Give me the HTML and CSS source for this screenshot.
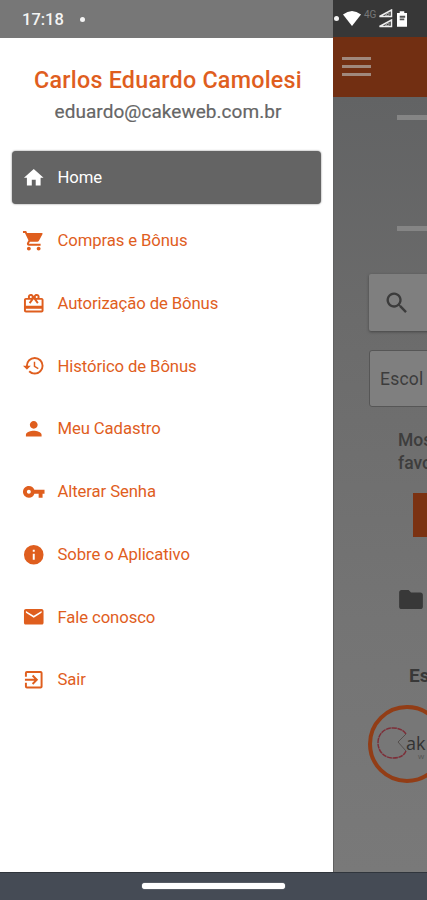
FILE: index.html
```html
<!DOCTYPE html>
<html lang="pt-BR">
<head>
<meta charset="utf-8">
<title>Menu</title>
<link rel="stylesheet" href="styles.css">
</head>
<body>
<div class="phone">
  <aside class="drawer">
    <div class="status status-left"><span class="clock">17:18</span><i class="dot"></i></div>
    <header class="profile">
      <h1><span>Carlos Eduardo Camolesi</span></h1>
      <p>eduardo@cakeweb.com.br</p>
    </header>
    <nav class="menu">
      <a class="item active"><svg viewBox="0 0 24 24"><path d="M10 20v-6h4v6h5v-8h3L12 3 2 12h3v8z"/></svg>Home</a>
      <a class="item"><svg viewBox="0 0 24 24"><path d="M7 18c-1.1 0-1.99.9-1.99 2S5.900 22 7 22s2-.9 2-2-.9-2-2-2zM1 2v2h2l3.600 7.590-1.350 2.450c-.16.28-.25.61-.25.96 0 1.100.9 2 2 2h12v-2H7.420c-.14 0-.25-.11-.25-.25l.03-.12.9-1.630h7.450c.75 0 1.410-.41 1.750-1.030l3.580-6.490A1 1 0 0 0 20 4H5.210l-.94-2H1zm16 16c-1.100 0-1.990.9-1.990 2s.89 2 1.990 2 2-.9 2-2-.9-2-2-2z"/></svg>Compras e Bônus</a>
      <a class="item"><svg viewBox="0 0 24 24"><path d="M20 6h-2.180c.11-.31.18-.65.18-1 0-1.660-1.340-3-3-3-1.050 0-1.960.54-2.500 1.350l-.5.670-.5-.68C10.960 2.540 10.050 2 9 2 7.340 2 6 3.340 6 5c0 .35.07.69.18 1H4c-1.110 0-1.990.89-1.990 2L2 19c0 1.110.89 2 2 2h16c1.110 0 2-.89 2-2V8c0-1.110-.89-2-2-2zm-5-2c.55 0 1 .45 1 1s-.45 1-1 1-1-.45-1-1 .45-1 1-1zM9 4c.55 0 1 .45 1 1s-.45 1-1 1-1-.45-1-1 .45-1 1-1zm11 15H4v-2h16v2zm0-5H4V8h5.080L7 10.830 8.620 12 11 8.760l1-1.360 1 1.360L15.380 12 17 10.830 14.920 8H20v6z"/></svg>Autorização de Bônus</a>
      <a class="item"><svg viewBox="0 0 24 24"><path d="M13 3a9 9 0 0 0-9 9H1l3.890 3.890.07.14L9 12H6c0-3.870 3.130-7 7-7s7 3.130 7 7-3.130 7-7 7c-1.930 0-3.680-.79-4.940-2.060l-1.420 1.420A8.950 8.950 0 0 0 13 21a9 9 0 0 0 0-18zm-1 5v5l4.280 2.540.72-1.210-3.500-2.080V8H12z"/></svg>Histórico de Bônus</a>
      <a class="item"><svg viewBox="0 0 24 24"><path d="M12 12c2.210 0 4-1.790 4-4s-1.790-4-4-4-4 1.790-4 4 1.790 4 4 4zm0 2c-2.670 0-8 1.340-8 4v2h16v-2c0-2.660-5.330-4-8-4z"/></svg>Meu Cadastro</a>
      <a class="item"><svg viewBox="0 0 24 24"><path d="M12.650 10A5.990 5.990 0 0 0 7 6c-3.310 0-6 2.690-6 6s2.690 6 6 6a5.990 5.990 0 0 0 5.650-4H17v4h4v-4h2v-4H12.650zM7 14c-1.100 0-2-.9-2-2s.9-2 2-2 2 .9 2 2-.9 2-2 2z"/></svg>Alterar Senha</a>
      <a class="item"><svg viewBox="0 0 24 24"><path d="M12 2a10 10 0 1 0 0 20 10 10 0 0 0 0-20zm1 15h-2v-6h2v6zm0-8h-2V7h2v2z"/></svg>Sobre o Aplicativo</a>
      <a class="item"><svg viewBox="0 0 24 24"><path d="M20 4H4c-1.100 0-1.990.9-1.990 2L2 18c0 1.100.9 2 2 2h16c1.100 0 2-.9 2-2V6c0-1.100-.9-2-2-2zm0 4-8 5-8-5V6l8 5 8-5v2z"/></svg>Fale conosco</a>
      <a class="item"><svg viewBox="0 0 24 24"><path d="M10.090 15.590 11.500 17l5-5-5-5-1.410 1.410L12.670 11H3v2h9.670l-2.580 2.590zM19 3H5a2 2 0 0 0-2 2v4h2V5h14v14H5v-4H3v4a2 2 0 0 0 2 2h14c1.100 0 2-.9 2-2V5c0-1.100-.9-2-2-2z"/></svg>Sair</a>
    </nav>
  </aside>

  <main class="page">
    <div class="status status-right">
      <i class="dot small"></i>
      <svg class="wifi" viewBox="0 0 18 15"><path d="M0 3.500Q9-3.500 18 3.500L9 15z"/></svg>
      <span class="net">4G</span>
      <svg class="signal" viewBox="0 0 15 19"><path d="M1.500 7.500 13.500 1v6.500zM1.500 17.500l12-6.500v6.500z"/><path class="fill" d="m7 6.500 4-3v3zM7 16.500l4-3v3z"/></svg>
      <svg class="battery" viewBox="0 0 11 17"><path d="M3 0h5v2h3v15H0V2h3z"/><path class="level" d="M3 5h6v2H3zM3 8h5v2H3z"/></svg>
    </div>
    <div class="appbar"><div class="burger"><i></i><i></i><i></i></div></div>
    <div class="content">
      <i class="line"></i>
      <i class="line second"></i>
      <div class="field search"><svg viewBox="0 0 24 24"><path d="M15.500 14h-.79l-.28-.27A6.500 6.500 0 1 0 13.730 14.430l.27.28v.79l5 4.990L20.490 19l-4.990-5zm-6 0a4.500 4.500 0 1 1 0-9 4.500 4.500 0 0 1 0 9z"/></svg></div>
      <div class="field select">Escol</div>
      <p class="hint">Mos<br>favo</p>
      <div class="button"></div>
      <svg class="folder" viewBox="2 4 20 16"><path d="M10 4H4c-1.100 0-1.990.9-1.990 2L2 18c0 1.100.9 2 2 2h16c1.100 0 2-.9 2-2V8c0-1.100-.9-2-2-2h-8l-2-2z"/></svg>
      <h2>Es</h2>
      <div class="store">
        <svg viewBox="0 0 34 36"><path class="bite" d="M30 8Q26 2 17 2C7 2 2 9 2 17s6 15 15 15q10 0 13-7"/><path class="mouth" d="m30 8-8 8 8 9"/></svg>
        <div class="brand"><b>ak</b><small>w</small></div>
      </div>
    </div>
  </main>
  <footer class="gesture"><i></i></footer>
</div>
</body>
</html>
```
FILE: styles.css
```css
* { box-sizing: border-box; }
body { margin: 0; font-family: Roboto, "Liberation Sans", sans-serif; }
h1, h2, p { margin: 0; }
i { display: block; }
svg { display: block; flex: none; fill: currentColor; }

.phone {
  width: 427px; height: 900px; overflow: hidden;
  display: grid; grid-template: 872px 28px / 333px 94px;
}
.drawer { background: #fff; }
.page {
  overflow: hidden; display: flex; flex-direction: column;
  background: linear-gradient(#626364 96px, #6b6b6b 320px, #747474 620px, #797979);
}

.status { height: 37px; flex: none; display: flex; align-items: center; color: #fff; }
.status-left { background: #777; padding: 2px 0 0 22px; height: 37.500px; }
.clock { font-size: 16.500px; font-weight: 500; letter-spacing: 0; width: 58px; color: #f4f4f4; }
.dot { width: 5px; height: 5px; border-radius: 50%; background: #f4f4f4; }
.status-right { background: #373737; padding-left: 1px; }
.wifi { width: 18px; height: 15px; margin-left: 4px; }
.net { font-size: 10px; color: #777; margin: -9px 0 0 3px; width: 12px; }
.signal { width: 15px; height: 19px; margin-left: 2px; fill: none; stroke: #eee; stroke-width: 1.500px; }
.signal .fill { stroke-width: 1px; stroke: #aaa; }
.battery { width: 10px; height: 16px; margin-left: 4px; }
.level { fill: #555; }

.profile { height: 113.500px; padding-top: 27px; text-align: center; }
.profile h1 { font-size: 23.300px; line-height: 30px; font-weight: 500; color: #df5e1e; letter-spacing: .25px; padding-left: 3px; white-space: nowrap; }
.profile p { font-size: 19px; line-height: 24px; margin-top: 5px; color: #666; padding-left: 3px; letter-spacing: .05px; -webkit-text-stroke: .2px #666; }

.menu { display: grid; grid-auto-rows: 52.500px; row-gap: 10.250px; padding: 0 12px; }
.item { display: flex; align-items: center; gap: 12px; padding: 1px 0 0 10px; color: #df5e1e; font-size: 16.700px; letter-spacing: -.1px; }
.item svg { width: 23.500px; height: 23.500px; }
.active { background: #646464; color: #fff; border-radius: 4px; box-shadow: 0 0 2px #777; }

.appbar { height: 59.500px; flex: none; background: #722f12; padding: 19.500px 0 0 9px; }
.burger { display: flex; flex-direction: column; gap: 4.500px; width: 29px; }
.burger i { height: 3.500px; background: #a0887c; }
.content { padding: 18.500px 0 0 35px; display: flex; flex-direction: column; align-items: flex-start; flex: 1; border-left: 1px solid #606060; }
.line { width: 40px; height: 5px; margin-left: 28px; background: #858585; flex: none; }
.line.second { margin-top: 106px; }
.field { width: 70px; height: 57px; flex: none; background: #7f7f7f; display: flex; align-items: center; }
.search { margin-top: 43px; padding-left: 14px; color: #3c3c3c; border-radius: 2px; box-shadow: 0 1px 3px #444; }
.search svg { width: 28px; height: 28px; }
.select { margin: 19px 0 0; padding: 1px 0 0 10px; font-size: 17.500px; letter-spacing: .2px; color: #3c3c3c; border: 1px solid #565656; border-radius: 3px; }
.hint { font-size: 17.500px; line-height: 22.500px; font-weight: 500; color: #3d3d3d; margin: 22px 0 0 29px; }
.button { width: 40px; height: 44px; background: #7b3212; margin: 19px 0 0 44px; flex: none; }
.folder { width: 24px; height: 19px; margin: 53px 0 0 30px; color: #383838; }
h2 { font-size: 19px; line-height: 24px; color: #383838; margin: 55px 0 0 40px; }
.store { width: 78px; height: 78px; flex: none; margin-top: 17px; margin-left: -1px; border: 4px solid #923d16; border-radius: 50%; display: flex; align-items: center; padding-left: 4px; background: #777; }
.store svg { width: 34px; height: 36px; fill: none; }
.bite { stroke: #7d2e38; stroke-width: 1.500px; stroke-dasharray: 5 .6; }
.mouth { stroke: #55504e; stroke-width: 1px; }
.brand { display: flex; flex-direction: column; margin: 5px 0 0 -4px; color: #333; font-family: "Open Sans", sans-serif; line-height: 18px; }
.brand b { font-size: 18px; font-weight: 400; }
.brand small { font-size: 8px; line-height: 8px; margin-left: 12px; color: #555; }

.gesture { grid-column: 1 / 3; background: #454b55; border-top: 1px solid #30353c; display: flex; justify-content: center; padding-top: 10px; }
.gesture i { width: 143px; height: 6px; border-radius: 3px; background: #fff; box-shadow: 0 0 1px #fff; }
```
